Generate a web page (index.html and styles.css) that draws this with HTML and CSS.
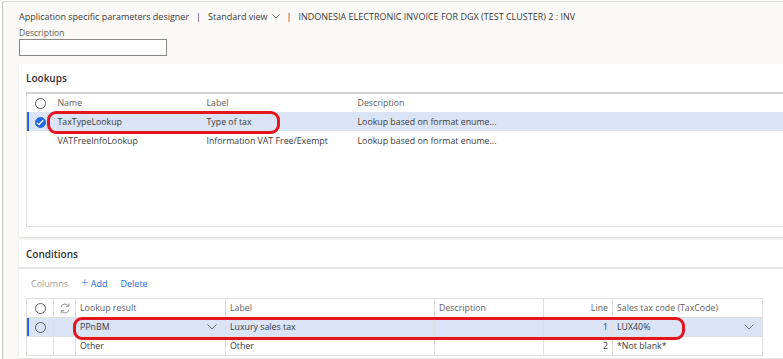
FILE: index.html
```html
<!DOCTYPE html>
<html lang="en">
<head>
  <meta charset="UTF-8">
  <title>Application specific parameters designer</title>
  <link rel="stylesheet" href="styles.css">
</head>
<body>
  <div class="page">
    <div class="breadcrumb">
      <span>Application specific parameters designer</span>
      <span class="sep">|</span>
      <span>Standard view</span>
      <svg class="chev-sm" width="8" height="5" viewBox="0 0 8 5"><polyline points="0.5,0.5 4,4 7.5,0.5" fill="none" stroke="#605e5c" stroke-width="0.9"/></svg>
      <span class="sep">|</span>
      <span>INDONESIA ELECTRONIC INVOICE FOR DGX (TEST CLUSTER) 2 : INV</span>
    </div>

    <label class="field-label">Description</label>
    <input class="field-input" type="text">

    <!-- Lookups -->
    <section class="card lookups">
      <h2 class="card-title">Lookups</h2>
      <table class="grid grid-lookups">
        <colgroup>
          <col style="width:27px"><col style="width:149px"><col style="width:151px"><col>
        </colgroup>
        <thead>
          <tr>
            <th><span class="radio"></span></th>
            <th>Name</th>
            <th>Label</th>
            <th>Description</th>
          </tr>
        </thead>
        <tbody>
          <tr class="selected">
            <td><span class="radio checked"><svg width="8" height="7" viewBox="0 0 8 7"><polyline points="0.8,3.6 3,5.7 7.2,1.2" fill="none" stroke="#fff" stroke-width="1.3"/></svg></span></td>
            <td>TaxTypeLookup</td>
            <td>Type of tax</td>
            <td>Lookup based on format enume...</td>
          </tr>
          <tr>
            <td></td>
            <td>VATFreeInfoLookup</td>
            <td>Information VAT Free/Exempt</td>
            <td>Lookup based on format enume...</td>
          </tr>
        </tbody>
      </table>
    </section>

    <!-- Conditions -->
    <section class="card conditions">
      <h2 class="card-title">Conditions</h2>
      <div class="toolbar">
        <span class="tb-muted">Columns</span>
        <span class="tb-link"><span class="plus">+</span> Add</span>
        <span class="tb-link">Delete</span>
      </div>
      <table class="grid grid-conditions">
        <colgroup>
          <col style="width:27px"><col style="width:22px"><col style="width:150px"><col style="width:209px"><col style="width:109px"><col style="width:69px"><col style="width:150px">
        </colgroup>
        <thead>
          <tr>
            <th><span class="radio"></span></th>
            <th class="ic">
              <svg width="12" height="11" viewBox="0 0 12 11"><path d="M2 4.2A4.2 4.2 0 0 1 9.6 3" fill="none" stroke="#8a8886" stroke-width="0.9"/><polyline points="9.9,0.6 9.8,3.3 7.1,3.2" fill="none" stroke="#8a8886" stroke-width="0.9"/><path d="M10 6.8A4.2 4.2 0 0 1 2.4 8" fill="none" stroke="#8a8886" stroke-width="0.9"/><polyline points="2.1,10.4 2.2,7.7 4.9,7.8" fill="none" stroke="#8a8886" stroke-width="0.9"/></svg>
            </th>
            <th>Lookup result</th>
            <th>Label</th>
            <th>Description</th>
            <th class="num">Line</th>
            <th>Sales tax code (TaxCode)</th>
          </tr>
        </thead>
        <tbody>
          <tr class="selected">
            <td><span class="radio"></span></td>
            <td></td>
            <td><div class="dd">PPnBM<svg width="10" height="6" viewBox="0 0 10 6"><polyline points="0.5,0.5 5,5 9.5,0.5" fill="none" stroke="#605e5c" stroke-width="0.9"/></svg></div></td>
            <td>Luxury sales tax</td>
            <td></td>
            <td class="num">1</td>
            <td><div class="dd">LUX40%<svg width="10" height="6" viewBox="0 0 10 6"><polyline points="0.5,0.5 5,5 9.5,0.5" fill="none" stroke="#605e5c" stroke-width="0.9"/></svg></div></td>
          </tr>
          <tr>
            <td></td>
            <td></td>
            <td>Other</td>
            <td>Other</td>
            <td></td>
            <td class="num">2</td>
            <td>*Not blank*</td>
          </tr>
        </tbody>
      </table>
    </section>

    <div class="mark mark-lookup"></div>
    <div class="mark mark-condition"></div>
  </div>
</body>
</html>
```

FILE: styles.css
```css
:root {
  --bg-page: #faf9f8;
  --text: #3b3a39;
  --text-muted: #605e5c;
  --line: #e1dfdd;
  --accent: #2266e3;
  --row-selected: #dae4f6;
  --mark: #e3151f;
}

html, body {
  margin: 0;
  height: 100%;
  overflow: hidden;
}

body {
  font-family: 'Open Sans', 'Noto Sans', sans-serif;
  font-size: 9px;
  color: var(--text);
  background: #fff;
  padding: 1px 0 0 2px;
  box-sizing: border-box;
}

.page {
  position: relative;
  height: 100%;
  background: var(--bg-page);
  border-top: 1px solid #dcdad8;
  border-left: 1px solid #c8c6c4;
  padding: 7px 0 0 16px;
  box-sizing: border-box;
}

.breadcrumb {
  display: flex;
  align-items: center;
  height: 14px;
  color: var(--text);
  font-size: 9px;
  white-space: nowrap;
}
.breadcrumb .sep {
  margin: 0 7px;
}
.chev-sm {
  margin-left: 4px;
}

.field-label {
  display: block;
  margin-top: 4px;
  font-size: 8.5px;
  line-height: 11px;
  color: var(--text-muted);
}
.field-input {
  display: block;
  width: 148px;
  height: 17px;
  box-sizing: border-box;
  margin: 1px 0 0;
  border: 1px solid #8a8886;
  background: #fff;
  padding: 0 4px;
}

.card {
  background: #fff;
  margin-top: 8px;
  box-shadow: 0 1px 2px rgba(0, 0, 0, 0.12);
  width: 780px;
}
.card.conditions {
  margin-top: 3px;
}

.card-title {
  margin: 0;
  height: 28px;
  line-height: 27px;
  padding-left: 7px;
  font-size: 10px;
  font-weight: 600;
  color: #323130;
}
.lookups .card-title {
  line-height: 29px;
}

.lookups {
  padding: 0 0 11px 7px;
  height: 173px;
  box-sizing: border-box;
}
.lookups .card-title {
  padding-left: 0;
}

.grid {
  border-collapse: collapse;
  table-layout: fixed;
  font-size: 8.8px;
}
.grid th {
  font-weight: 400;
  color: var(--text-muted);
  text-align: left;
  height: 19px;
  padding: 0 4px;
  white-space: nowrap;
}
.grid td {
  height: 19px;
  padding: 0 4px;
  white-space: nowrap;
  color: var(--text);
}
.grid th:first-child, .grid td:first-child {
  text-align: center;
  padding: 0;
}
.grid .num {
  text-align: right;
}

.grid-lookups {
  width: 100%;
  height: 134px;
  border-top: 2px solid #d6d4d2;
  border-left: 1px solid var(--line);
  border-bottom: 1px solid var(--line);
}
.grid-lookups thead th {
  height: 17px;
  padding-bottom: 1px;
}
.grid-lookups tbody tr:last-child td {
  vertical-align: top;
  padding-top: 4px;
}
.grid-lookups tbody tr:last-child {
  height: 95px;
}
.grid-lookups tr.selected td {
  background: var(--row-selected);
}

.grid tr.selected td:first-child {
  box-shadow: inset 2px 0 0 var(--accent);
}

.radio {
  display: inline-flex;
  align-items: center;
  justify-content: center;
  width: 11px;
  height: 11px;
  border: 1px solid #605e5c;
  border-radius: 50%;
  box-sizing: border-box;
  vertical-align: middle;
}
.radio.checked {
  background: var(--accent);
  border-color: var(--accent);
}

.conditions {
  padding-bottom: 2px;
}
.conditions .card-title {
  border-bottom: 2px solid #e8e6e4;
  height: 27px;
  line-height: 28px;
}
.toolbar {
  display: flex;
  align-items: center;
  gap: 13px;
  height: 29px;
  padding-left: 12px;
  font-size: 9px;
}
.tb-muted {
  color: #a19f9d;
}
.tb-link {
  color: var(--accent);
}
.tb-link .plus {
  font-size: 13px;
  font-weight: 300;
  line-height: 9px;
}

.grid-conditions {
  margin-left: 7px;
  width: 736px;
  border-left: 1px solid var(--line);
}
.grid-conditions th, .grid-conditions td {
  border: 1px solid var(--line);
  height: 18px;
}
.grid-conditions th {
  border-left: 0;
}
.grid-conditions th.ic {
  text-align: center;
  padding: 0;
}
.grid-conditions th.ic svg {
  vertical-align: middle;
}
.grid-conditions tr.selected td {
  background: var(--row-selected);
}
.dd {
  display: flex;
  align-items: center;
  justify-content: space-between;
  padding-right: 4px;
}

.mark {
  position: absolute;
  border: 3px solid var(--mark);
  border-radius: 9px;
  box-sizing: border-box;
}
.mark-lookup {
  left: 44px;
  top: 109px;
  width: 233px;
  height: 23px;
}
.mark-condition {
  left: 70px;
  top: 315px;
  width: 612px;
  height: 23px;
}
```
